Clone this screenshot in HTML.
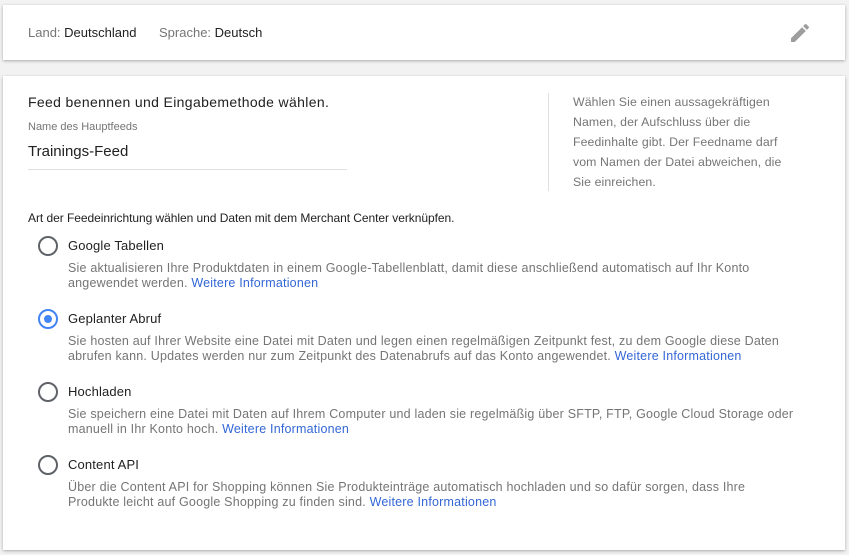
<!DOCTYPE html>
<html><head><meta charset="utf-8"><style>
html,body{margin:0;padding:0;width:849px;height:555px;background:#f2f2f2;overflow:hidden;font-family:"Liberation Sans",Arial,sans-serif;}
.card{position:absolute;left:3px;width:842px;background:#fff;box-shadow:0 1px 3px rgba(0,0,0,.3);}
.t{position:absolute;white-space:nowrap;}
.g{color:#757575}
.d{color:#212121}
a{color:#3367d6;text-decoration:none}
.radio{position:absolute;left:38px;width:16px;height:16px;border:2px solid #5f6368;border-radius:50%;box-sizing:content-box}
.radio.on{border-color:#4285f4}
.radio.on::after{content:"";position:absolute;left:4px;top:4px;width:8px;height:8px;border-radius:50%;background:#4285f4}
.desc{position:absolute;left:68px;font-size:12.5px;line-height:15px;color:#757575;white-space:nowrap;letter-spacing:0.2px}
.ttl{position:absolute;left:68px;font-size:13px;color:#212121;white-space:nowrap;letter-spacing:0.15px}
</style></head><body>
<div class="card" style="top:5px;height:55px">
 <div class="t" style="left:25px;top:20px;font-size:13px"><span class="g">Land:</span> <span class="d">Deutschland</span></div>
 <div class="t" style="left:156px;top:20px;font-size:13px"><span class="g">Sprache:</span> <span class="d">Deutsch</span></div>
 <svg style="position:absolute;left:785px;top:16px" width="24" height="24" viewBox="0 0 24 24"><path fill="#9e9e9e" d="M3 17.25V21h3.75L17.81 9.94l-3.75-3.75L3 17.25zM20.71 7.04a1 1 0 0 0 0-1.41l-2.34-2.34a1 1 0 0 0-1.41 0l-1.830 1.83 3.75 3.75 1.83-1.83z"/></svg>
</div>
<div class="card" style="top:76px;height:474px">
 <div class="t d" style="left:25px;top:18px;font-size:14px;letter-spacing:0.35px">Feed benennen und Eingabemethode wählen.</div>
 <div class="t g" style="left:25px;top:45px;font-size:11px">Name des Hauptfeeds</div>
 <div class="t d" style="left:25px;top:67px;font-size:15px">Trainings-Feed</div>
 <div style="position:absolute;left:25px;top:93px;width:319px;height:1px;background:#e0e0e0"></div>
 <div style="position:absolute;left:545px;top:17px;width:1px;height:98px;background:#e0e0e0"></div>
 <div class="t g" style="left:570px;top:16px;font-size:12.3px;line-height:20px;letter-spacing:0.1px">Wählen Sie einen aussagekräftigen<br>Namen, der Aufschluss über die<br>Feedinhalte gibt. Der Feedname darf<br>vom Namen der Datei abweichen, die<br>Sie einreichen.</div>
</div>
<div class="t d" style="left:28px;top:211px;font-size:12px;letter-spacing:-0.05px">Art der Feedeinrichtung wählen und Daten mit dem Merchant Center verknüpfen.</div>

<div class="radio" style="top:236px"></div>
<div class="ttl" style="top:238px">Google Tabellen</div>
<div class="desc" style="top:261px">Sie aktualisieren Ihre Produktdaten in einem Google-Tabellenblatt, damit diese anschließend automatisch auf Ihr Konto<br>angewendet werden. <a>Weitere Informationen</a></div>

<div class="radio on" style="top:309px"></div>
<div class="ttl" style="top:311px">Geplanter Abruf</div>
<div class="desc" style="top:334px">Sie hosten auf Ihrer Website eine Datei mit Daten und legen einen regelmäßigen Zeitpunkt fest, zu dem Google diese Daten<br>abrufen kann. Updates werden nur zum Zeitpunkt des Datenabrufs auf das Konto angewendet. <a>Weitere Informationen</a></div>

<div class="radio" style="top:382px"></div>
<div class="ttl" style="top:384px">Hochladen</div>
<div class="desc" style="top:407px">Sie speichern eine Datei mit Daten auf Ihrem Computer und laden sie regelmäßig über SFTP, FTP, Google Cloud Storage oder<br>manuell in Ihr Konto hoch. <a>Weitere Informationen</a></div>

<div class="radio" style="top:455px"></div>
<div class="ttl" style="top:457px">Content API</div>
<div class="desc" style="top:480px">Über die Content API for Shopping können Sie Produkteinträge automatisch hochladen und so dafür sorgen, dass Ihre<br>Produkte leicht auf Google Shopping zu finden sind. <a>Weitere Informationen</a></div>
</body></html>
